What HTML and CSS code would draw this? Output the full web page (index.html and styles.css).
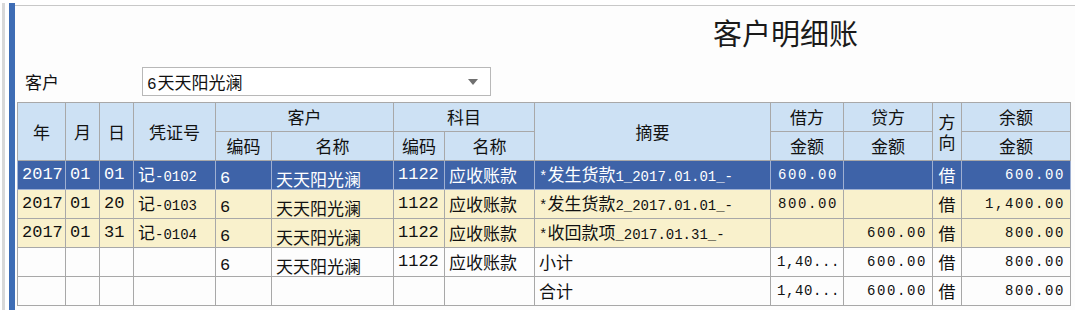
FILE: index.html
```html
<!DOCTYPE html>
<html>
  <head>
    <meta charset="UTF-8">
    <title>客户明细账</title>
    <link rel="stylesheet" href="styles.css">
  </head>
  <body>

  <div class="frame">
    <div class="rail"></div>
    <div class="bar"></div>
    <div class="panel">
      <h1 class="title">客户明细账</h1>

      <div class="filter">
        <span class="label">客户</span>
        <div class="combo">
          <span class="combo-text"><span class="n">6</span>天天阳光澜</span>
          <span class="arrow"></span>
        </div>
      </div>

      <table class="ledger">
        <colgroup>
          <col style="width:48px"><col style="width:34px"><col style="width:34px"><col style="width:82px">
          <col style="width:56px"><col style="width:122px"><col style="width:51px"><col style="width:90px">
          <col style="width:236px"><col style="width:73px"><col style="width:89px"><col style="width:29px">
          <col style="width:109px">
        </colgroup>
        <thead>
          <tr>
            <th rowspan=2>年</th>
            <th rowspan=2>月</th>
            <th rowspan=2>日</th>
            <th rowspan=2>凭证号</th>
            <th colspan=2>客户</th>
            <th colspan=2>科目</th>
            <th rowspan=2>摘要</th>
            <th>借方</th>
            <th>贷方</th>
            <th rowspan=2 class="dir">方<br>向</th>
            <th>余额</th>
          </tr>
          <tr>
            <th>编码</th>
            <th>名称</th>
            <th>编码</th>
            <th>名称</th>
            <th>金额</th>
            <th>金额</th>
            <th>金额</th>
          </tr>
        </thead>
        <tbody>
          <tr class="sel">
            <td class="n">2017</td>
            <td class="n">01</td>
            <td class="n">01</td>
            <td>记<span class="n">-0102</span></td>
            <td class="n cu">6</td>
            <td class="cu">天天阳光澜</td>
            <td class="n">1122</td>
            <td>应收账款</td>
            <td><span class="n">*</span>发生货款<span class="n">1_2017.01.01_-</span></td>
            <td class="amt">600.00</td>
            <td class="amt"></td>
            <td class="mid">借</td>
            <td class="amt">600.00</td>
          </tr>
          <tr class="open">
            <td class="n">2017</td>
            <td class="n">01</td>
            <td class="n">20</td>
            <td>记<span class="n">-0103</span></td>
            <td class="n cu">6</td>
            <td class="cu">天天阳光澜</td>
            <td class="n">1122</td>
            <td>应收账款</td>
            <td><span class="n">*</span>发生货款<span class="n">2_2017.01.01_-</span></td>
            <td class="amt">800.00</td>
            <td class="amt"></td>
            <td class="mid">借</td>
            <td class="amt">1,400.00</td>
          </tr>
          <tr class="open">
            <td class="n">2017</td>
            <td class="n">01</td>
            <td class="n">31</td>
            <td>记<span class="n">-0104</span></td>
            <td class="n cu">6</td>
            <td class="cu">天天阳光澜</td>
            <td class="n">1122</td>
            <td>应收账款</td>
            <td><span class="n">*</span>收回款项<span class="n">_2017.01.31_-</span></td>
            <td class="amt"></td>
            <td class="amt">600.00</td>
            <td class="mid">借</td>
            <td class="amt">800.00</td>
          </tr>
          <tr>
            <td></td>
            <td></td>
            <td></td>
            <td></td>
            <td class="n cu">6</td>
            <td class="cu">天天阳光澜</td>
            <td class="n">1122</td>
            <td>应收账款</td>
            <td>小计</td>
            <td class="amt cut">1,40...</td>
            <td class="amt">600.00</td>
            <td class="mid">借</td>
            <td class="amt">800.00</td>
          </tr>
          <tr>
            <td></td>
            <td></td>
            <td></td>
            <td></td>
            <td></td>
            <td></td>
            <td></td>
            <td></td>
            <td>合计</td>
            <td class="amt cut">1,40...</td>
            <td class="amt">600.00</td>
            <td class="mid">借</td>
            <td class="amt">800.00</td>
          </tr>
        </tbody>
      </table>
    </div>
  </div>

  </body>
</html>
```

FILE: styles.css
```css
body {
  margin: 0;
  background-color: #ffffff;
  color: #111111;
  font-family: "Noto Sans CJK SC", "Liberation Sans", sans-serif;
  }

.frame {
  display: flex;
  height: 307px;
  padding-top: 3px;
  }

/* thin grey rail and the blue window edge on the left */
.rail {
  width: 3px;
  margin-left: 2px;
  background-color: #d8d8d8;
  }

.bar {
  width: 6px;
  margin-left: 4px;
  background-color: #3e6db5;
  }

.panel {
  flex: 1;
  margin-top: 2px;
  margin-right: 5px;
  border-top: 1px solid #c8c8c8;
  background-color: #fdfdfd;
  }

.title {
  margin: 0;
  padding: 8px 0 0 698px;
  height: 36px;
  font-size: 29px;
  line-height: 36px;
  font-weight: normal;
  color: #1a1a1a;
  }

.filter {
  display: flex;
  align-items: center;
  margin-top: 17px;
  padding-left: 10px;
  height: 29px;
  }

.label {
  width: 117px;
  font-size: 17px;
  }

.combo {
  display: flex;
  align-items: center;
  justify-content: space-between;
  box-sizing: border-box;
  width: 349px;
  height: 29px;
  padding: 0 12px 0 4px;
  border: 1px solid #b8b8b8;
  background-color: #ffffff;
  font-size: 17px;
  }

.combo .n {
  font-size: 16px;
  margin-right: 1px;
  }

.arrow {
  width: 0;
  height: 0;
  border-left: 5px solid transparent;
  border-right: 5px solid transparent;
  border-top: 6px solid #707070;
  }

.ledger {
  margin: 6px 0 0 2px;
  width: 1053px;
  table-layout: fixed;
  border-collapse: collapse;
  border: 1px solid #a2a2a2;
  }

.ledger th, .ledger td {
  box-sizing: border-box;
  height: 29px;
  padding: 0 4px;
  border: 1px solid #a8a8a8;
  white-space: nowrap;
  overflow: hidden;
  font-size: 17px;
  font-weight: normal;
  line-height: 20px;
  }

.ledger th {
  background-color: #cde1f4;
  text-align: center;
  }

.ledger th.dir {
  padding: 0;
  line-height: 20px;
  }

.ledger td {
  text-align: left;
  }

.n {
  font-family: "Liberation Mono", monospace;
  font-size: 14px;
  }

/* customer cells sit a little lower in their rows */
.ledger td.cu {
  padding-top: 7px;
  }

.ledger td.amt {
  text-align: right;
  padding-right: 5px;
  font-family: "Liberation Mono", monospace;
  font-size: 14px;
  letter-spacing: 1.6px;
  }

/* truncated total that does not fit the debit column */
.ledger td.cut {
  text-align: left;
  padding-left: 6px;
  padding-right: 0;
  letter-spacing: 0.6px;
  }

.ledger td.mid {
  text-align: center;
  padding: 0;
  }

.sel td {
  background-color: #3e63a8;
  color: #ffffff;
  border-color: #9fb0d2;
  }

.open td {
  background-color: #f9f1cc;
  }
```
